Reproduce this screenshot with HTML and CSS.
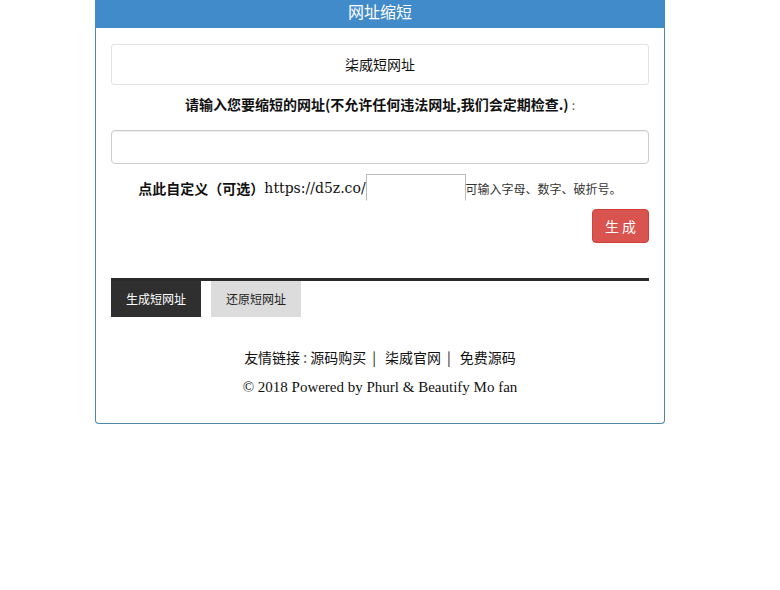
FILE: index.html
```html
<!DOCTYPE html>
<html lang="zh-CN">
<head>
<meta charset="utf-8">
<title>网址缩短</title>
<link rel="stylesheet" href="styles.css">
</head>
<body>
<div class="panel">
  <div class="panel-heading">网址缩短</div>
  <div class="panel-body">
    <div class="well">柒威短网址</div>
    <p class="prompt">请输入您要缩短的网址(不允许任何违法网址,我们会定期检查.) <span class="colon">:</span></p>
    <input class="url-input" type="text">
    <div class="custom-row">
      <span class="custom-label">点此自定义（可选）</span><span class="domain">https://d5z.co/</span><input class="alias-input" type="text"><span class="hint">可输入字母、数字、破折号。</span>
    </div>
    <div class="btn-row"><button class="btn-danger">生 成</button></div>
    <div class="tabs">
      <div class="tab tab-active">生成短网址</div>
      <div class="tab tab-idle">还原短网址</div>
    </div>
    <div class="footer">
      <p class="links">友情链接<span class="colon"> : </span>源码购买<span class="sep">|</span>柒威官网<span class="sep">|</span>免费源码</p>
      <p class="copy">© 2018 Powered by Phurl &amp; Beautify Mo fan</p>
    </div>
  </div>
</div>
</body>
</html>
```

FILE: styles.css
```css
html, body {
  margin: 0;
  padding: 0;
  background: #fff;
}
body {
  font-family: "Noto Sans CJK SC", "Liberation Sans", sans-serif;
  color: #222;
  font-size: 14px;
}
.panel {
  width: 568px;
  margin-left: 95px;
  border: 1px solid #4d87a8;
  border-top: none;
  border-radius: 0 0 4px 4px;
}
.panel-heading {
  height: 25px;
  padding-top: 3px;
  background: #428bca;
  color: #fff;
  font-size: 16px;
  line-height: 16px;
  text-align: center;
  margin: 0 -1px;
}
.panel-body {
  padding: 16px 15px 25px;
}
.well {
  height: 39px;
  border: 1px solid #e3e3e3;
  border-radius: 3px;
  text-align: center;
  line-height: 39px;
  font-size: 14px;
  color: #111;
}
.prompt {
  margin: 9px 0 0;
  height: 20px;
  line-height: 20px;
  text-align: center;
  font-weight: bold;
  font-size: 14px;
  color: #111;
}
.prompt .colon {
  font-weight: normal;
  font-size: 12px;
  color: #555;
}
.url-input {
  display: block;
  box-sizing: border-box;
  width: 100%;
  height: 34px;
  margin: 16px 0 0;
  border: 1px solid #ccc;
  border-radius: 4px;
  box-shadow: inset 0 1px 1px rgba(0,0,0,.075);
  outline: none;
}
.custom-row {
  display: flex;
  align-items: center;
  justify-content: center;
  margin-top: 10px;
  height: 27px;
}
.custom-label {
  font-weight: bold;
  font-size: 14px;
  color: #111;
}
.domain {
  font-family: "DejaVu Serif", serif;
  font-size: 14px;
  color: #111;
}
.alias-input {
  box-sizing: border-box;
  width: 100px;
  height: 27px;
  margin: 0;
  padding: 0;
  border: 1px solid #bbb;
  border-bottom-color: #fff;
  outline: none;
  align-self: flex-start;
}
.hint {
  font-size: 12px;
  color: #333;
  margin-top: 2px;
}
.btn-row {
  display: flex;
  justify-content: flex-end;
  margin-top: 8px;
}
.btn-danger {
  width: 57px;
  height: 34px;
  border: 1px solid #d43f3a;
  border-radius: 4px;
  background: #d9534f;
  color: #fff;
  font-family: "Noto Sans CJK SC", sans-serif;
  font-size: 14px;
  padding: 0;
}
.tabs {
  display: flex;
  gap: 10px;
  margin-top: 35px;
  border-top: 3px solid #2b2b2b;
}
.tab {
  width: 90px;
  height: 36px;
  line-height: 36px;
  text-align: center;
  font-size: 12px;
}
.tab-active {
  background: #2f2f2f;
  color: #fff;
}
.tab-idle {
  background: #dcdcdc;
  color: #222;
}
.footer {
  text-align: center;
  margin-top: 29px;
}
.links {
  margin: 0;
  height: 22px;
  line-height: 22px;
  font-size: 14px;
  color: #111;
}
.links .colon {
  color: #555;
}
.sep {
  margin: 0 9px 0 6px;
}
.copy {
  margin: 8px 0 0;
  height: 22px;
  line-height: 22px;
  font-family: "Liberation Serif", serif;
  font-size: 15px;
  color: #111;
}
```
